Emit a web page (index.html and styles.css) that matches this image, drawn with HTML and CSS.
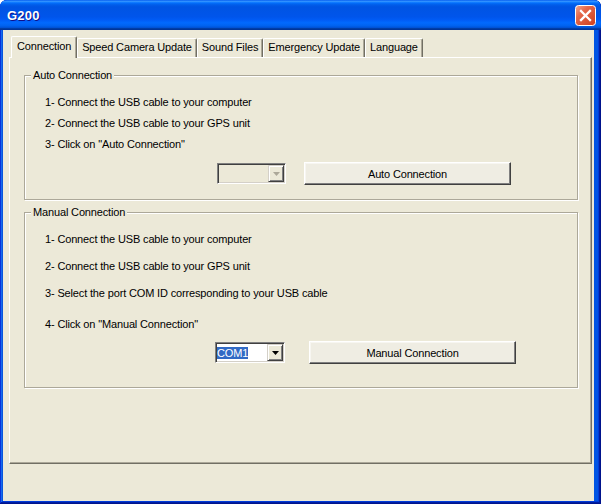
FILE: index.html
```html
<!DOCTYPE html>
<html>
<head>
<meta charset="utf-8">
<title>G200</title>
<link rel="stylesheet" href="styles.css">
</head>
<body>
<div class="window">
  <div class="titlebar">
    <span class="title">G200</span>
    <span class="close">
      <svg width="21" height="21" viewBox="0 0 21 21">
        <defs>
          <linearGradient id="cg" x1="0" y1="0" x2="1" y2="1">
            <stop offset="0" stop-color="#F2A890"/>
            <stop offset="0.35" stop-color="#E4674A"/>
            <stop offset="1" stop-color="#CF3F1C"/>
          </linearGradient>
        </defs>
        <rect x="0.5" y="0.5" width="20" height="20" rx="3" fill="url(#cg)" stroke="#fff"/>
        <path d="M6 6 L15 15 M15 6 L6 15" stroke="#fff" stroke-width="2.3" stroke-linecap="square"/>
      </svg>
    </span>
  </div>
  <div class="client">
    <div class="tabs">
      <div class="tab active">Connection</div>
      <div class="tab">Speed Camera Update</div>
      <div class="tab">Sound Files</div>
      <div class="tab">Emergency Update</div>
      <div class="tab">Language</div>
    </div>
    <div class="panel">
      <div class="group group-auto">
        <span class="legend">Auto Connection</span>
        <div class="steps steps-auto">
          <div class="step">1- Connect the USB cable to your computer</div>
          <div class="step">2- Connect the USB cable to your GPS unit</div>
          <div class="step">3- Click on "Auto Connection"</div>
        </div>
        <div class="controls controls-auto">
          <div class="combo combo-disabled">
            <span class="field"></span>
            <span class="drop"><svg width="7" height="4" viewBox="0 0 7 4"><path d="M0 0H7L3.5 4Z"/></svg></span>
          </div>
          <div class="btn">Auto Connection</div>
        </div>
      </div>
      <div class="group group-manual">
        <span class="legend">Manual Connection</span>
        <div class="steps steps-manual">
          <div class="step">1- Connect the USB cable to your computer</div>
          <div class="step">2- Connect the USB cable to your GPS unit</div>
          <div class="step">3- Select the port COM ID corresponding to your USB cable</div>
          <div class="step step-last">4- Click on "Manual Connection"</div>
        </div>
        <div class="controls controls-manual">
          <div class="combo combo-com">
            <span class="field"><span class="sel">COM1</span></span>
            <span class="drop"><svg width="7" height="4" viewBox="0 0 7 4"><path d="M0 0H7L3.5 4Z"/></svg></span>
          </div>
          <div class="btn">Manual Connection</div>
        </div>
      </div>
    </div>
  </div>
</div>
</body>
</html>
```
FILE: styles.css
```css
* { box-sizing: border-box; }
html, body { margin: 0; padding: 0; }
body {
  width: 601px;
  height: 504px;
  overflow: hidden;
  background: #ffffff;
  font-family: "Liberation Sans", Arial, sans-serif;
  font-size: 11px;
  letter-spacing: -0.15px;
  color: #000;
}
.window {
  width: 601px;
  height: 504px;
  display: flex;
  flex-direction: column;
  background: #0054E3;
  border-radius: 7px 7px 0 0;
  box-shadow: inset -1px -1px #00138c, inset 1px 1px #0831d9, inset -2px -2px #001ea0, inset 2px 2px #166aee, inset -3px -3px #003bda, inset 3px 3px #0855dd;
}
.titlebar {
  height: 30px;
  flex: none;
  display: flex;
  align-items: center;
  padding-left: 7px;
  border-radius: 7px 7px 0 0;
  background: linear-gradient(180deg, #0058ee 0%, #3593ff 4%, #288eff 6%, #127dff 8%, #036ffc 10%, #0262ee 14%, #0057e5 20%, #0054e3 24%, #0055eb 56%, #005bf5 66%, #026afe 76%, #0062ef 86%, #0052d6 92%, #0040ab 94%, #003092 100%);
}
.title {
  font-family: "Liberation Sans", Arial, sans-serif;
  font-weight: bold;
  font-size: 13px;
  color: #fff;
  text-shadow: 1px 1px #0f1089;
  letter-spacing: 0.2px;
}
.close {
  margin-left: auto;
  margin-right: 5px;
  align-self: flex-start;
  margin-top: 5px;
  width: 21px;
  height: 21px;
  display: block;
}
.close svg { display: block; }
.client {
  flex: 1;
  margin: 0 7px 3px 3px;
  background: #ECE9D8;
  padding: 6px 0 0 6px;
}
.tabs {
  display: flex;
  align-items: flex-end;
  height: 22px;
  margin: 0 0 -1px 2px;
  position: relative;
  z-index: 1;
}
.tab {
  height: 19px;
  margin-bottom: 1px;
  padding: 0 4px;
  line-height: 17px;
  border: 1px solid;
  border-color: #fff #716F64 transparent #fff;
  border-bottom: none;
  border-radius: 2px 2px 0 0;
  background: #ECE9D8;
  box-shadow: inset -1px 0 #ACA899;
  white-space: nowrap;
}
.tab.active {
  height: 22px;
  margin-bottom: 0;
  padding: 0 5px;
  line-height: 18px;
}
.panel {
  width: 583px;
  height: 407px;
  border: 1px solid;
  border-color: #fff #716F64 #716F64 #fff;
  box-shadow: inset -1px -1px #ACA899;
  padding: 17px 0 0 14px;
  display: flex;
  flex-direction: column;
}
.group {
  position: relative;
  width: 554px;
  border: 1px solid #ACA899;
  box-shadow: 1px 1px 0 #fff, inset 1px 1px 0 #fff;
  padding: 20px 0 0 20px;
}
.group-auto { height: 125px; }
.group-manual { height: 176px; margin-top: 12px; }
.legend {
  position: absolute;
  top: -7px;
  left: 6px;
  padding: 0 2px;
  line-height: 13px;
  background: #ECE9D8;
  white-space: nowrap;
}
.steps { display: flex; flex-direction: column; }
.steps-auto { gap: 8px; }
.steps-manual { gap: 14px; }
.step { height: 13px; line-height: 13px; white-space: nowrap; }
.step-last { margin-top: 4px; }
.controls { display: flex; align-items: flex-start; }
.controls-auto { margin-top: 11px; }
.controls-manual { margin-top: 10px; }
.combo {
  display: flex;
  height: 21px;
  margin-top: 1px;
  border: 1px solid;
  border-color: #808080 #fff #fff #808080;
  padding: 1px;
  box-shadow: inset 1px 1px #404040, inset -1px -1px #D4D0C8;
}
.combo-disabled { width: 69px; margin-left: 172px; background: #ECE9D8; }
.combo-com { width: 70px; margin-left: 170px; background: #fff; }
.field {
  flex: 1;
  display: flex;
  align-items: center;
}
.sel {
  background: #316AC5;
  color: #fff;
  line-height: 12px;
}
.drop {
  width: 16px;
  height: 100%;
  background: #ECE9D8;
  border: 1px solid;
  border-color: #D4D0C8 #404040 #404040 #D4D0C8;
  box-shadow: inset 1px 1px #fff, inset -1px -1px #808080;
  display: flex;
  align-items: center;
  justify-content: center;
}
.drop svg { display: block; fill: #000; }
.combo-disabled .drop svg { fill: #ACA899; }
.btn {
  width: 207px;
  height: 23px;
  display: flex;
  align-items: center;
  justify-content: center;
  border: 1px solid;
  border-color: #fff #404040 #404040 #fff;
  box-shadow: inset -1px -1px #808080, inset 1px 1px #F7F6F1;
  background: #EFEDE3;
  white-space: nowrap;
}
.controls-auto .btn { margin-left: 18px; }
.controls-manual .btn { margin-left: 24px; }
```
